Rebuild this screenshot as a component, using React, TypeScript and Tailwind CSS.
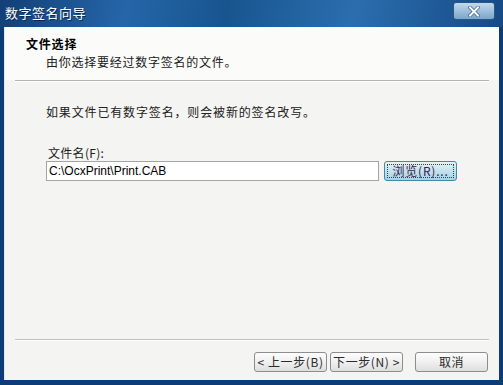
import React from 'react';

const cjk = '"Noto Sans CJK SC", "Liberation Sans", sans-serif';

const WinButton: React.FC<{ children: React.ReactNode; className?: string }> = ({ children, className = '' }) => (
    <button
        className={`h-[20px] rounded-[3px] border border-[#8d8d8d] bg-[linear-gradient(180deg,#fdfdfd_0%,#f0f0f0_50%,#dedede_100%)] text-[12px] leading-[18px] tracking-[0.6px] text-[#2a2a2a] flex items-center justify-center ${className}`}
    >
        {children}
    </button>
);

export default function App() {
    return (
        <div className="w-[503px] h-[385px] flex flex-col bg-[#0c3c76] overflow-hidden" style={{ fontFamily: cjk }}>
            {/* Title bar */}
            <div className="h-[27px] flex items-start justify-between bg-[linear-gradient(100deg,#123f76_0%,#2566a8_25%,#18558f_45%,#2b6eae_70%,#154a86_100%)]">
                <span className="pl-[5px] pt-[5px] text-[13px] leading-[16px] text-white tracking-[0.5px] [text-shadow:1px_1px_0_#0a2a50]">
                    数字签名向导
                </span>
                <div className="mt-[2px] mr-[8px] w-[42px] h-[18px] rounded-[3px] border border-[#2a5688] bg-[linear-gradient(180deg,#c4d9ea_0%,#9ebfdb_50%,#7aa6cb_100%)] flex items-center justify-center">
                    <svg width="12" height="11" viewBox="0 0 12 11">
                        <path d="M2 1.5 L10 9.5 M10 1.5 L2 9.5" stroke="#3a5f86" strokeWidth="3.4" strokeLinecap="square" />
                        <path d="M2 1.5 L10 9.5 M10 1.5 L2 9.5" stroke="#ffffff" strokeWidth="2" strokeLinecap="square" />
                    </svg>
                </div>
            </div>

            {/* Client area */}
            <div className="flex-1 ml-[4px] mr-[4px] mb-[5px] flex flex-col bg-[#f4f4f2] border-l border-[#dfe8f2]">
                {/* Header */}
                <div className="h-[53px] bg-[#fbfbfa] pt-[9px] flex flex-col gap-[2px]">
                    <div className="pl-[21px] text-[12px] leading-[16px] font-bold text-black tracking-[0.8px]">文件选择</div>
                    <div className="pl-[41px] text-[12px] leading-[16px] text-[#202020] tracking-[0.75px]">由你选择要经过数字签名的文件。</div>
                </div>
                <div className="mx-[10px] border-t border-[#b4b4b4] border-b border-b-white" />

                {/* Body */}
                <div className="flex-1 flex flex-col pl-[41px] pt-[22px]">
                    <div className="text-[12px] leading-[16px] text-[#202020] tracking-[0.85px]">如果文件已有数字签名，则会被新的签名改写。</div>
                    <div className="mt-[25px] pl-[2px] text-[12px] leading-[16px] text-[#202020] tracking-[0.3px]">文件名(F):</div>
                    <div className="flex items-center gap-[5px]">
                        <div
                            className="w-[333px] h-[20px] border border-[#a5a5a5] bg-white pl-[2px] text-[12px] leading-[18px] text-black"
                            style={{ fontFamily: '"Liberation Sans", sans-serif' }}
                        >
                            C:\OcxPrint\Print.CAB
                        </div>
                        <button className="w-[73px] h-[20px] rounded-[3px] border border-[#3f8aa6] bg-[linear-gradient(180deg,#e4f3f8_0%,#c3e2ee_50%,#a7d2e3_100%)] p-[2px]">
                            <div className="w-full h-full border border-dotted border-[#404040] flex items-center justify-center text-[12px] leading-[14px] tracking-[0.8px] text-[#3a2048]">
                                浏览(R)...
                            </div>
                        </button>
                    </div>
                </div>

                {/* Footer */}
                <div className="mx-[10px] border-t border-[#c0c0c0] border-b border-b-white" />
                <div className="h-[39px] pt-[11px] pr-[11px] flex justify-end">
                    <WinButton className="w-[73px]">&lt; 上一步(B)</WinButton>
                    <WinButton className="w-[73px] ml-[3px]">下一步(N) &gt;</WinButton>
                    <WinButton className="w-[73px] ml-[12px]">取消</WinButton>
                </div>
            </div>
        </div>
    );
}
